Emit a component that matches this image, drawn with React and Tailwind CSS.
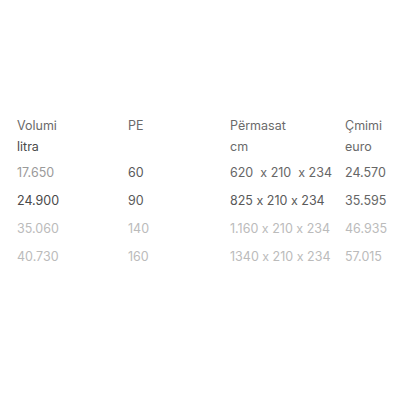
export default function App() {
  const rows = [
    { v: "17.650", pe: "60", dim: "620  x 210  x 234", price: "24.570", c: ["text-[#9a9a9a]", "text-[#5a5a5a]", "text-[#666]", "text-[#666]"] },
    { v: "24.900", pe: "90", dim: "825 x 210 x 234", price: "35.595", c: ["text-[#4a4a4a]", "text-[#5a5a5a]", "text-[#5a5a5a]", "text-[#666]"] },
    { v: "35.060", pe: "140", dim: "1.160 x 210 x 234", price: "46.935", c: ["text-[#bbb]", "text-[#bbb]", "text-[#bbb]", "text-[#bbb]"] },
    { v: "40.730", pe: "160", dim: "1340 x 210 x 234", price: "57.015", c: ["text-[#bbb]", "text-[#bbb]", "text-[#bbb]", "text-[#bbb]"] },
  ];

  return (
    <div className="w-[400px] h-[400px] bg-white pt-[115px] pl-[17px] font-['Inter',sans-serif] text-[12.5px] [font-feature-settings:'calt'_0]">
      <div className="grid grid-cols-[111px_102px_115px_1fr] leading-[21px] text-[#6a6a6a]">
        <div>Volumi</div>
        <div>PE</div>
        <div>Përmasat</div>
        <div>Çmimi</div>
        <div className="text-[#4a4a4a]">litra</div>
        <div></div>
        <div>cm</div>
        <div>euro</div>
      </div>
      <div className="mt-[2px]">
        {rows.map((r) => (
          <div key={r.v} className="grid grid-cols-[111px_102px_115px_1fr] leading-[28px] whitespace-pre">
            <div className={r.c[0]}>{r.v}</div>
            <div className={r.c[1]}>{r.pe}</div>
            <div className={r.c[2]}>{r.dim}</div>
            <div className={r.c[3]}>{r.price}</div>
          </div>
        ))}
      </div>
    </div>
  );
}
